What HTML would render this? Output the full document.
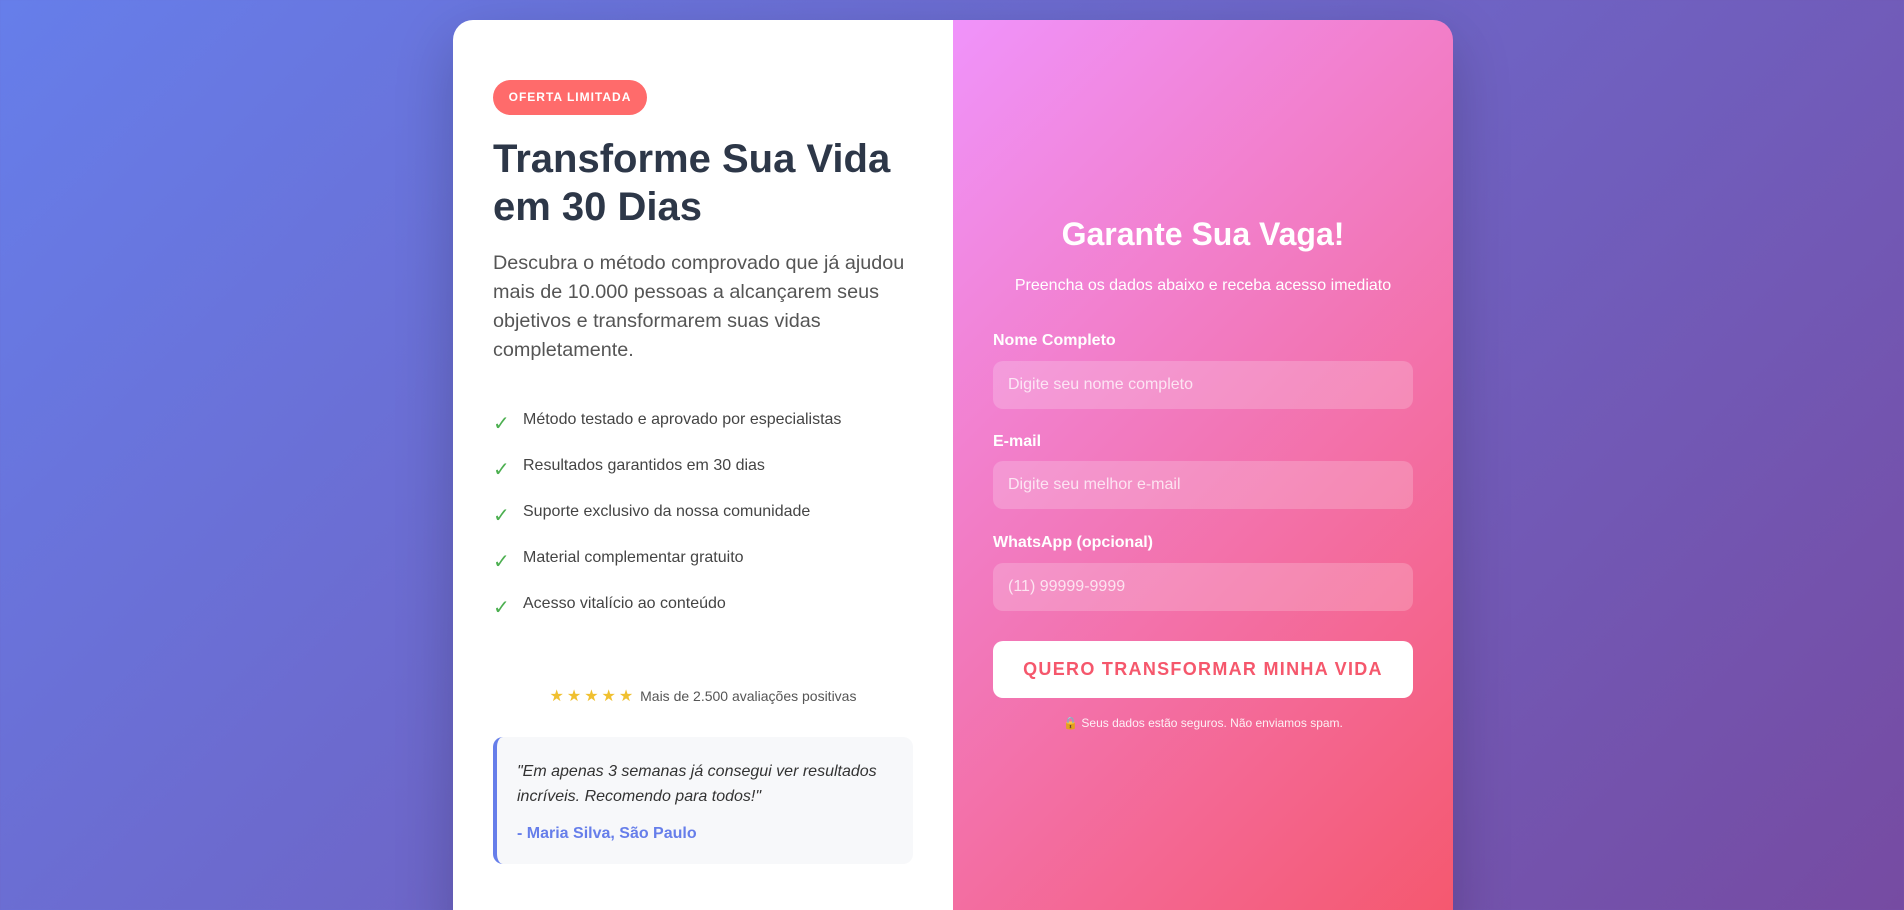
<!DOCTYPE html>
<html><head><meta charset="utf-8"><style>
*{margin:0;padding:0;box-sizing:border-box}
html,body{width:1904px;height:910px;overflow:hidden}
body{font-family:"Liberation Sans",Arial,sans-serif;background:linear-gradient(135deg,#667eea 0%,#764ba2 100%);position:relative}
.card{position:absolute;left:453px;top:20px;width:1000px;height:920px;border-radius:20px;overflow:hidden;display:flex;box-shadow:0 20px 60px rgba(0,0,0,.2)}
.left{width:500px;background:#fff;padding:60px 40px 40px;position:relative}
.right{width:500px;background:linear-gradient(135deg,#f093fb 0%,#f5576c 100%);position:relative}
.badge{display:inline-block;background:#ff6b6b;color:#fff;font-size:12px;font-weight:bold;letter-spacing:1px;height:35px;line-height:35px;padding:0 15px;border-radius:18px;width:154px;text-align:center}
h1{font-size:40px;line-height:48px;color:#2d3748;margin-top:20px;font-weight:bold}
.p{font-size:19.8px;line-height:29px;color:#555;margin-top:18px}
ul{list-style:none;position:absolute;left:40px;top:380px}
li{height:46px;font-size:16px;color:#444;position:relative;padding-left:30px;line-height:40px}
li:before{content:"✓";position:absolute;left:0;top:3px;color:#4caf50;font-size:20px;font-family:"DejaVu Sans",sans-serif}
.stars{position:absolute;left:40px;width:420px;top:666px;text-align:center;font-size:14px;color:#555}
.stars span{color:#f0c030;font-size:16px;letter-spacing:3px}
.test{position:absolute;left:40px;top:717px;width:420px;height:127px;background:#f7f8fa;border-left:4px solid #667eea;border-radius:10px;padding:22px 20px}
.test i{display:block;font-size:16px;line-height:25px;color:#333}
.test b{display:block;color:#667eea;font-size:16px;margin-top:16px}
.right h2{position:absolute;top:196px;left:0;width:500px;text-align:center;color:#fff;font-size:32px}
.sub{position:absolute;top:257px;width:500px;text-align:center;color:#fff;font-size:16px}
.lab{position:absolute;left:40px;color:#fff;font-weight:bold;font-size:16px}
.inp{position:absolute;left:40px;width:420px;height:48px;border-radius:10px;background:rgba(255,255,255,.2);color:rgba(255,255,255,.75);font-size:16px;line-height:48px;padding-left:15px}
.btn{position:absolute;left:40px;width:420px;height:57px;background:#fff;border-radius:10px;text-align:center;line-height:57px;color:#f5576c;font-weight:bold;font-size:18px;letter-spacing:1.3px}
.foot{position:absolute;width:500px;text-align:center;color:#fff;font-size:12px;opacity:.9}
</style></head><body>
<div class="card">
<div class="left">
<div class="badge">OFERTA LIMITADA</div>
<h1>Transforme Sua Vida em 30 Dias</h1>
<div class="p">Descubra o método comprovado que já ajudou mais de 10.000 pessoas a alcançarem seus objetivos e transformarem suas vidas completamente.</div>
<ul>
<li>Método testado e aprovado por especialistas</li>
<li>Resultados garantidos em 30 dias</li>
<li>Suporte exclusivo da nossa comunidade</li>
<li>Material complementar gratuito</li>
<li>Acesso vitalício ao conteúdo</li>
</ul>
<div class="stars"><span>★★★★★</span> Mais de 2.500 avaliações positivas</div>
<div class="test"><i>"Em apenas 3 semanas já consegui ver resultados incríveis. Recomendo para todos!"</i><b>- Maria Silva, São Paulo</b></div>
</div>
<div class="right">
<h2>Garante Sua Vaga!</h2>
<div class="sub">Preencha os dados abaixo e receba acesso imediato</div>
<div class="lab" style="top:312px">Nome Completo</div>
<div class="inp" style="top:341px">Digite seu nome completo</div>
<div class="lab" style="top:413px">E-mail</div>
<div class="inp" style="top:441px">Digite seu melhor e-mail</div>
<div class="lab" style="top:514px">WhatsApp (opcional)</div>
<div class="inp" style="top:543px">(11) 99999-9999</div>
<div class="btn" style="top:621px">QUERO TRANSFORMAR MINHA VIDA</div>
<div class="foot" style="top:696px">🔒 Seus dados estão seguros. Não enviamos spam.</div>
</div>
</div>
</body></html>
